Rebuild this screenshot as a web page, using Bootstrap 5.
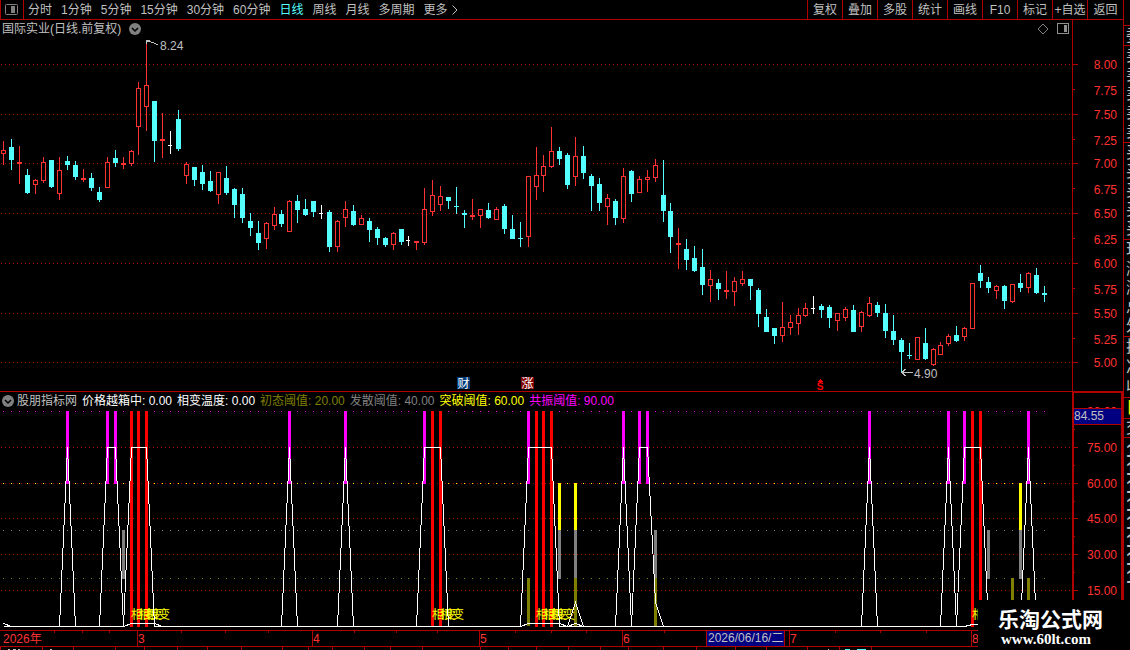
<!DOCTYPE html>
<html lang="zh-CN">
<head>
<meta charset="utf-8">
<meta name="viewport" content="width=device-width, initial-scale=1">
<title>国际实业 日线</title>
<link href="https://cdn.jsdelivr.net/npm/bootstrap@5.3.0/dist/css/bootstrap.min.css" rel="stylesheet">
<style>
  :root { --line: #b00000; --up: #ff3232; --down: #54ffff; --silver: #c0c0c0; }
  body { background: #000; color: var(--silver); font: 12px/18px "Liberation Sans", "Noto Sans CJK SC", sans-serif; }
  svg { display: block; }
  svg text { font-size: 12px; }
  button { background: none; border: 0; padding: 0; color: inherit; font: inherit; line-height: 18px; white-space: nowrap; }
  .rule-b { border-bottom: 1px solid var(--line); }
  .rule-t { border-top: 1px solid var(--line); }
  .toolbar { height: 20px; }
  .periods { gap: 9px; }
  .pane-toggle { width: 24px; height: 19px; padding-left: 4px; border: solid var(--line); border-width: 0 1px; }
  .period-on { color: var(--down); }
  .tool { width: 35px; height: 19px; border-left: 1px solid var(--line); }
  .tool:last-child { width: 36px; }
  .title-row { height: 18px; line-height: 20px; padding: 0 3px 0 2px; }
  .legend { gap: 5px; height: 19px; line-height: 16px; padding-left: 2px; }
  .legend button { margin-right: -2px; }
  .axis-col { width: 51px; }
  .axis-low { border: solid var(--line); border-width: 2px 2px 0; position: relative; height: 239px; }
  .axis-low svg { margin-top: -2px; }
  .value-tag { position: absolute; top: 15px; left: 0; right: 0; height: 17px; line-height: 15px; background: #000080; border: solid var(--line); border-width: 1px 0; }
  .quotes { width: 7px; border-left: 1px solid var(--line); overflow: hidden; padding-top: 25px; }
  .q-group { border-top: 1px solid var(--line); white-space: nowrap; }
  .q-group div { height: 19px; line-height: 19px; font-size: 16px; text-indent: 2px; width: 24px; }
  .q-group .h20 { height: 20px; }
  .q-group .h18 { height: 18px; line-height: 18px; }
  .q-times .h18 { font-size: 18px; font-weight: 700; }
  .date-axis { height: 17px; }
  .date-tag { position: absolute; left: 706px; top: 0; height: 15px; line-height: 15px; padding: 0 1px; background: #000080; border: solid var(--line); border-width: 0 1px; }
  .water { width: 152px; height: 50px; background: #000; color: #fff; padding: 5px 8px 0 20px; }
  .water-name { font: 700 21px/26px "Noto Sans CJK SC", sans-serif; }
  .water-url { font: 700 15px/16px "Liberation Serif", serif; color: #fff; padding-left: 3px; }
  .c-white { color: #fff; } .c-olive { color: #808000; } .c-gray { color: #808080; } .c-yellow { color: #ff0; } .c-mag { color: #f0f; }
  .crisp { shape-rendering: crispEdges; }
</style>
<script src="https://cdn.jsdelivr.net/npm/bootstrap@5.3.0/dist/js/bootstrap.bundle.min.js"></script>
</head>
<body class="m-0 overflow-hidden">
<div class="position-relative">
  <div class="d-flex">
    <main class="flex-fill overflow-hidden">
      <nav class="toolbar rule-b d-flex justify-content-between">
        <div class="d-flex gap-1">
          <button class="pane-toggle" aria-label="侧栏"><svg width="13" height="11"><rect x=".5" y=".5" width="12" height="10" rx="1" fill="none" stroke="#808080"/><rect x="6" y="2" width="4" height="7" fill="#808080"/></svg></button>
          <div class="periods d-flex">
          <button>分时</button><button>1分钟</button><button>5分钟</button><button>15分钟</button><button>30分钟</button><button>60分钟</button><button class="period-on">日线</button><button>周线</button><button>月线</button><button>多周期</button>
          <button class="d-flex align-items-center">更多<svg width="9" height="10" class="ms-1"><path d="M.5 .5L5 5L.5 9.500" fill="none" stroke="#c0c0c0"/></svg></button>
          </div>
        </div>
        <div class="d-flex">
          <button class="tool">复权</button><button class="tool">叠加</button><button class="tool">多股</button><button class="tool">统计</button><button class="tool">画线</button><button class="tool">F10</button><button class="tool">标记</button><button class="tool">+自选</button><button class="tool">返回</button>
        </div>
      </nav>
      <div class="d-flex">
        <div class="flex-fill overflow-hidden">
          <div class="title-row d-flex align-items-center">
            <span>国际实业(日线.前复权)</span>
            <button class="ms-2" aria-label="展开"><svg width="12" height="12"><circle cx="6" cy="6" r="6" fill="#808080"/><path d="M3 5l3 3l3-3" fill="none" stroke="#000" stroke-width="1.500"/></svg></button>
            <svg class="ms-auto" width="12" height="12"><path d="M6 1L11 6L6 11L1 6Z" fill="none" stroke="#808080"/></svg>
            <svg class="ms-2 crisp" width="12" height="12"><rect x=".5" y=".5" width="11" height="10" fill="none" stroke="#909090"/><rect x="7" y="2" width="3" height="7" fill="#909090"/></svg>
          </div>
          <svg id="price" width="100%" height="353"></svg>
          <div class="legend rule-t d-flex align-items-center">
            <button aria-label="指标菜单"><svg width="12" height="12"><circle cx="6" cy="6" r="6" fill="#808080"/><path d="M3 5l3 3l3-3" fill="none" stroke="#000" stroke-width="1.500"/></svg></button>
            <span>股朋指标网</span><span class="c-white">价格越箱中: 0.00</span><span class="c-white">相变温度: 0.00</span><span class="c-olive">初态阈值: 20.00</span><span class="c-gray">发散阈值: 40.00</span><span class="c-yellow">突破阈值: 60.00</span><span class="c-mag">共振阈值: 90.00</span>
          </div>
          <svg id="signal" width="100%" height="220"></svg>
        </div>
        <div class="axis-col flex-shrink-0">
          <svg id="axisTop" width="51" height="371"></svg>
          <div class="axis-low">
            <svg id="axisLow" width="47" height="239"></svg>
            <div class="value-tag">84.55</div>
          </div>
        </div>
      </div>
      <div class="date-axis rule-t rule-b position-relative">
        <svg id="dates" width="100%" height="15"></svg>
        <div class="date-tag">2026/06/16/二</div>
      </div>
      <svg id="tabs" class="crisp" width="100%" height="3"></svg>
    </main>
    <aside class="quotes flex-shrink-0" aria-label="盘口">
      <div class="q-group"><div>委</div></div>
      <div class="q-group"><div>卖</div><div>卖</div><div>卖</div><div>卖</div><div class="h20">卖</div></div>
      <div class="q-group"><div>买</div><div>买</div><div>买</div><div>买</div><div class="h20">买</div></div>
      <div class="q-group"><div>现</div><div>涨</div><div>涨</div><div>总</div><div class="h20">外</div></div>
      <div class="q-group"><div class="h20">换</div><div class="h20">净</div><div class="h20">收</div></div>
      <div class="q-group c-yellow"><div class="h20">日</div></div>
      <div class="q-group"><div class="h18">交</div></div>
      <div class="q-group q-times pt-1"><div class="h18">1</div><div class="h18">1</div><div class="h18">1</div><div class="h18">1</div><div class="h18">1</div><div class="h18">1</div><div class="h18">1</div><div class="h18">1</div></div>
    </aside>
  </div>
  <div class="water position-absolute end-0 bottom-0">
    <div class="water-name">乐淘公式网</div>
    <div class="water-url">www.60lt.com</div>
  </div>
</div>
<script>
// Each bar: kind (r rising, c falling, w flat), high, body top, body bottom, low.
const bars = `r141,150,154,165 c139,147,160,170 r146,162,164,184 c169,175,193,194 r179,180,185,194 r157,162,181,183 c160,160,187,188 r157,170,194,200 c156,161,165,170 c161,165,177,180
r169,178,180,182 c173,178,188,191 c187,192,200,202 r157,162,188,188 c150,158,163,167 r157,163,165,169 r150,151,164,166 r82,88,127,155 r43,85,107,131 c101,101,141,162
r113,139,141,158 w131,145,146,154 c110,119,149,151 r162,164,176,184 c167,167,180,186 c165,172,184,190 c171,181,191,192 r172,172,195,204 c166,178,193,195 c188,189,205,218
c188,194,218,223 c213,221,228,236 c221,233,243,250 r222,223,239,249 r207,214,226,230 c210,214,224,227 r200,201,232,232 c195,201,210,223 c199,209,215,216 c201,201,212,217
w205,213,214,219 c210,212,247,252 r220,221,247,252 r201,209,218,227 c205,211,225,226 r215,218,225,225 c218,221,230,242 c227,229,238,245 c237,238,245,247 r232,233,245,250
c229,229,242,245 w236,240,241,246 r241,241,243,250 r188,209,243,245 r180,195,212,216 r186,196,205,211 c197,197,201,209 c187,206,207,214 c210,213,215,228 r199,215,217,220
r209,209,216,228 c203,210,218,219 r207,209,220,220 c204,206,229,234 c215,229,239,239 c222,238,239,247 r176,176,237,247 r147,175,187,200 r155,166,176,192 r127,151,167,168
c147,151,159,165 c153,155,185,189 r137,156,177,186 c146,156,173,179 c174,176,186,211 c178,184,203,211 r194,198,207,225 c199,201,218,225 r168,176,219,223 c170,171,194,202
r176,179,193,193 r170,177,180,192 r159,165,178,182 c160,195,211,222 c203,211,237,253 r228,243,245,269 c239,249,260,270 c246,258,271,272 c249,267,285,295 r270,279,286,302
c279,283,289,300 r271,290,292,299 r277,281,292,306 r271,279,284,286 c279,279,286,300 c288,290,314,327 c309,317,332,332 c328,328,336,344 r302,327,336,342 r315,322,328,335
r308,315,324,335 r303,308,316,317 w296,308,309,314 c304,306,310,318 c305,307,318,328 r313,313,321,331 r307,309,318,321 c305,310,332,332 r311,312,327,332 r297,303,316,317
c302,305,313,317 c304,313,331,338 c315,331,340,345 c338,340,352,372 c343,355,356,359 r337,337,360,360 c328,343,359,360 r348,349,365,366 r342,345,355,355 r334,336,344,346
c326,335,341,342 r327,328,337,341 r283,283,329,329 c265,273,281,288 c277,282,288,293 r285,286,291,299 c285,286,301,309 r284,284,302,303 c274,283,288,292 r272,273,288,293
c268,275,293,294 c286,293,295,302`.split(/\s+/);
const narrow = [17, 35, 51, 68, 84, 101, 118];   // slots one pixel narrower than the rest
const slot = i => 3 + 8 * i - narrow.filter(n => n <= i).length;
const rect = (x, y, w, h, f) => `<rect x="${x}" y="${y}" width="${w}" height="${h}" fill="${f}"/>`;
const dots = y => `<line x1="1" x2="100%" y1="${y + .5}" y2="${y + .5}" stroke="#a00000" stroke-dasharray="1 3"/>`;
const text = (x, y, s, f, a = 'start') => `<text x="${x}" y="${y}" fill="${f}" text-anchor="${a}">${s}</text>`;
const ink = { r: '#ff3232', c: '#54ffff', w: '#ffffff' };

let p = [64, 114, 163, 213, 263, 313, 362].map(dots).join('');
bars.forEach((b, i) => {
  const k = b[0], [h, t, m, l] = b.slice(1).split(',').map(Number), x = slot(i);
  if (k === 'r' && m - t > 2) {
    p += rect(x, h, 1, t - h, ink.r) + rect(x, m, 1, l - m, ink.r)
      + `<rect x="${x - 1.5}" y="${t + .5}" width="4" height="${m - t - 1}" fill="#000" stroke="${ink.r}"/>`;
  } else p += rect(x, h, 1, l - h, ink[k]) + rect(x - 2, t, k === 'w' ? 4 : 5, m - t, ink[k]);
});
p += `<path d="M146.500 44V40.500H150M147 41.500H151M151 42.500H154M154 43.500H156M156 44.500H158" fill="none" stroke="#c0c0c0"/>`
  + text(160, 50, '8.24', '#c0c0c0')
  + `<path d="M902 372.500H913M905.500 369L902 372.500L905.500 376" fill="none" stroke="#c0c0c0"/>` + text(914, 378, '4.90', '#c0c0c0')
  + rect(457, 377, 13, 12, '#003c78') + text(457.5, 388, '财', '#fff') + rect(521, 377, 13, 12, '#800000') + text(521.5, 388, '涨', '#fff')
  + `<path d="M817 382L820 379L823 382Z" fill="#f00"/><text x="820" y="390" fill="#f00" text-anchor="middle" style="font-size:10px;font-weight:700">S</text>`;
price.innerHTML = `<g class="crisp" transform="translate(0 -38)">${p}</g>`;

let s = [447, 483, 518, 554, 590].map(dots).join('');
bars.forEach((_, i) => { [[411, '#f0f'], [483, '#ff0'], [530, '#808080'], [578, '#808000']].forEach(([y, f]) => s += rect(slot(i), y, 1, 1, f)); });
const sticks = (xs, y, h, f) => xs.forEach(x => s += rect(x - 1, y, 3, h, f));
const red = [131, 138, 146, 432, 440, 536, 543, 551, 972, 980];
sticks([67, 107, 115, 289, 345, 424, 528, 623, 639, 647, 869, 948, 964, 1028], 411, 73, '#f0f');
sticks([559, 575, 1020], 483, 48, '#ff0');
sticks([123, 559, 575, 655, 988, 1020], 530, 49, '#808080');
sticks([528, 575, 655, 1012, 1028], 578, 48, '#808000');
sticks(red, 411, 216, '#f00');
red.forEach(x => s += text(x, 619, '相变', '#ff0'));
const trace = pts => s += `<polyline points="${pts}" transform="translate(.5 .5)" fill="none" stroke="#fff"/>`;
trace('3,626 59,626 67,447 75,626 99,626 107,447 115,447 123,626 131,447 146,447 154,626 281,626 289,447 297,626 337,626 345,447 353,626 416,626 424,447 440,447 448,626 520,626 528,447 551,447 559,626 615,626 623,447 631,626 639,447 647,447 655,602 663,626 861,626 869,447 877,626 940,626 948,447 956,626 964,447 980,447 988,626 1020,626 1028,447 1036,626 1044,626');
trace('3,623 11,626 123,626 131,623 154,623 162,626 520,626 528,623 559,623 567,626 575,602 583,626 964,626 972,624 988,624');
trace('567,626 575,623 583,626');
signal.innerHTML = `<g class="crisp" transform="translate(0 -410)">${s}</g>`;

let a = rect(0, 20, 1, 371, '#b00000');
[[64, '8.00'], [89, '7.75'], [114, '7.50'], [139, '7.25'], [163, '7.00'], [188, '6.75'], [213, '6.50'], [238, '6.25'], [263, '6.00'], [288, '5.75'], [313, '5.50'], [338, '5.25'], [362, '5.00']]
  .forEach(([y, t], i) => a += rect(1, y, i % 2 ? 2 : 5, 1, '#b00000') + text(45, y + (i % 2 ? 6 : 5), t, ink.r, 'end'));
axisTop.innerHTML = `<g transform="translate(0 -20)">${a}</g>`;
let b = [429, 465, 501, 536, 572].map(y => rect(0, y, 1, 1, '#b00000')).join('');
[[411, '90.00'], [447, '75.00'], [483, '60.00'], [518, '45.00'], [554, '30.00'], [590, '15.00']]
  .forEach(([y, t]) => b += rect(0, y, 4, 1, '#b00000') + text(43, y + 5, t, ink.r, 'end'));
axisLow.innerHTML = `<g transform="translate(0 -391)">${b}</g>`;

let d = text(3, 12, '2026年', ink.r);
[[137, 3], [312, 4], [479, 5], [622, 6], [789, 7], [971, 8]].forEach(([x, t]) => d += rect(x, 0, 1, 15, '#b00000') + text(x + 1, 12, t, ink.r));
[54, 82, 109, 181, 225, 268, 354, 396, 437, 515, 551, 586, 664, 835, 880, 926].forEach(x => d += rect(x, 0, 1, 2, '#b00000'));
dates.innerHTML = d;
tabs.innerHTML = [0, 42, 73, 115, 144, 177, 207, 241, 282, 308, 332, 364, 390, 422, 480, 508, 536, 568, 600, 628, 663, 696, 735, 766, 807, 839, 871].map(x => rect(x, 0, 1, 3, '#b00000')).join('')
  + [[8, 2], [13, 3], [18, 2], [50, 2], [828, 1]].map(([x, w]) => rect(x, 2, w, 1, '#c0c0c0')).join('') + rect(845, 2, 5, 1, ink.c) + rect(857, 2, 9, 1, ink.c);
</script>
</body>
</html>
